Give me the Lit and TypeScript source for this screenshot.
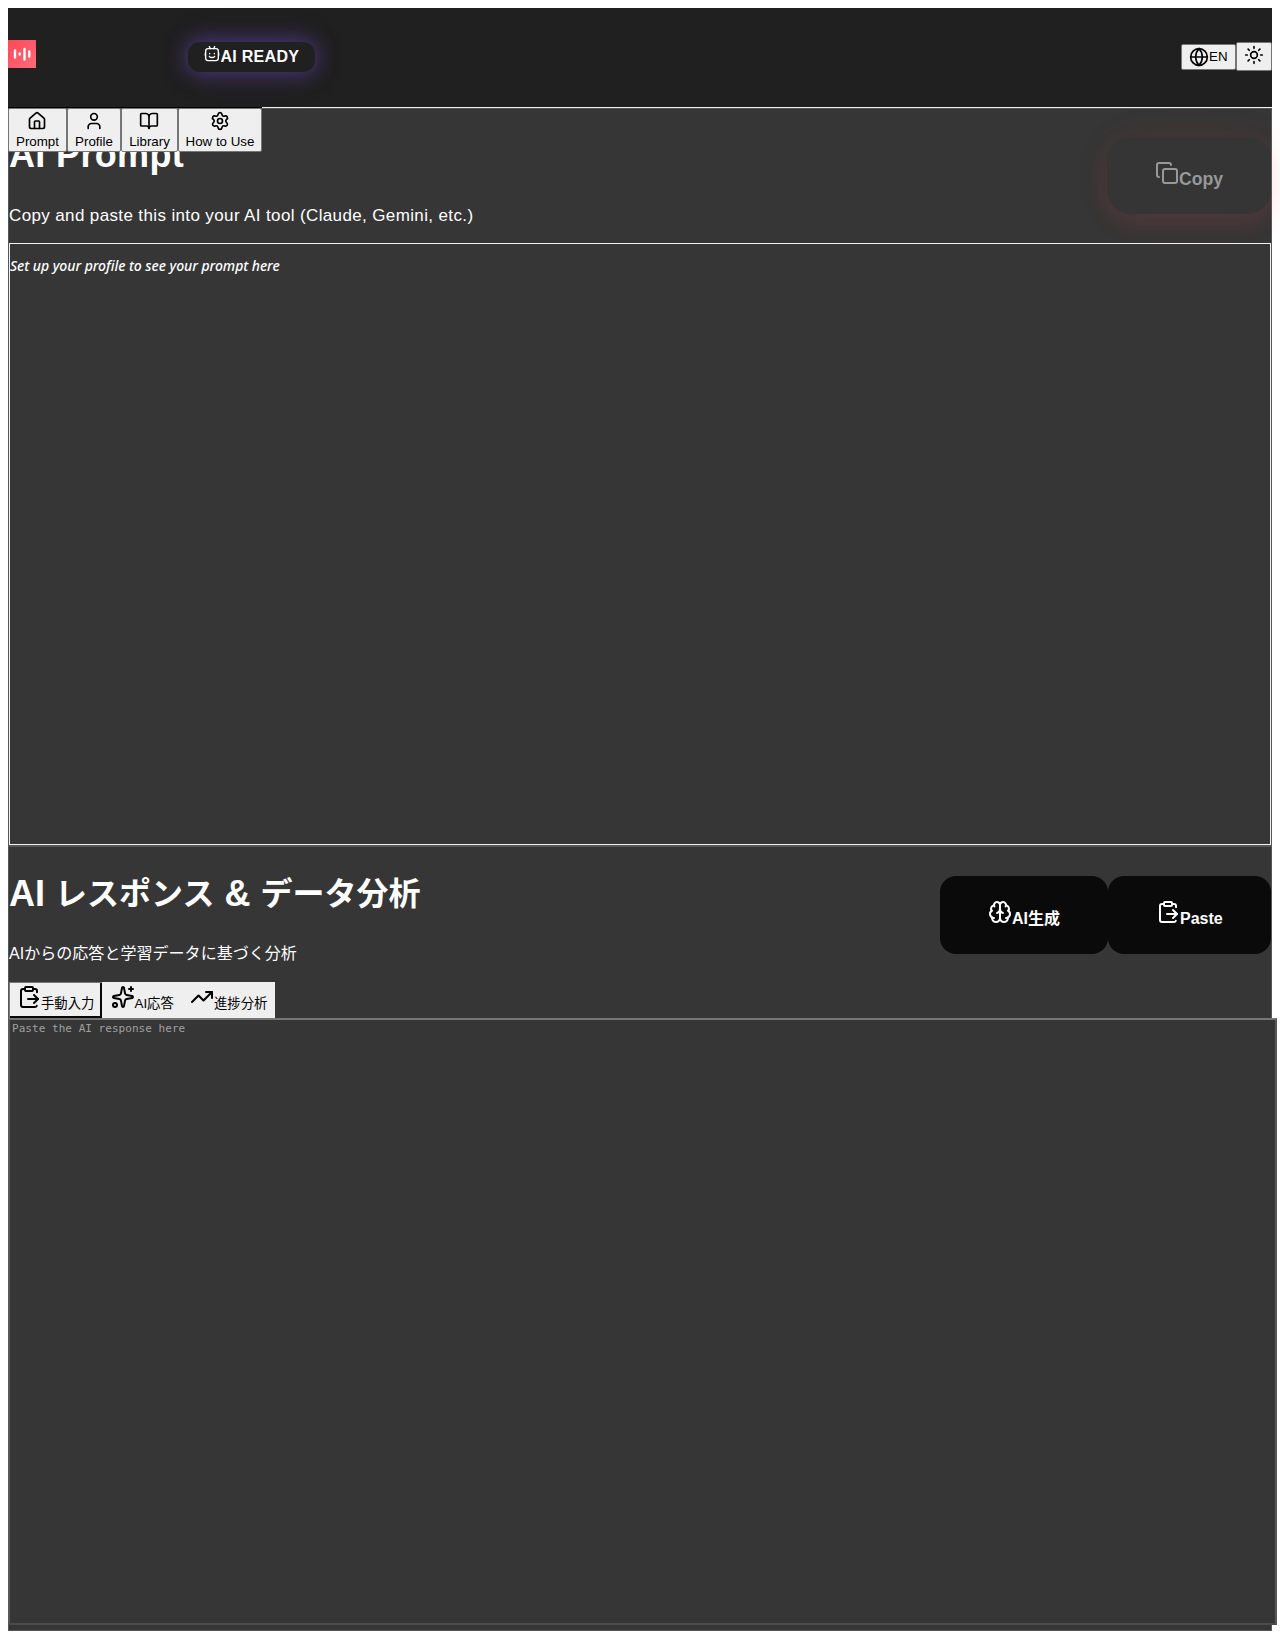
import { LitElement, html, css, svg, type SVGTemplateResult } from "lit";
import { customElement, property } from "lit/decorators.js";

const ICONS: Record<string, SVGTemplateResult> = {
  robot: svg`<rect x="2.500" y="4" width="19" height="18" rx="3.500"/><path d="M8 1l1.500 3M16 1l-1.500 3M2 10.500v4M22 10.500v4M8.500 11v.8M15.500 11v.8M8 15.500c1.500 2.400 6.500 2.400 8 0"/>`,
  house: svg`<path d="M15 21v-8a1 1 0 0 0-1-1h-4a1 1 0 0 0-1 1v8"/><path d="M3 10a2 2 0 0 1 .709-1.528l7-5.999a2 2 0 0 1 2.582 0l7 5.999A2 2 0 0 1 21 10v9a2 2 0 0 1-2 2H5a2 2 0 0 1-2-2z"/>`,
  user: svg`<path d="M19 21v-2a4 4 0 0 0-4-4H9a4 4 0 0 0-4 4v2"/><circle cx="12" cy="7" r="4"/>`,
  book: svg`<path d="M12 7v14"/><path d="M3 18a1 1 0 0 1-1-1V4a1 1 0 0 1 1-1h5a4 4 0 0 1 4 4 4 4 0 0 1 4-4h5a1 1 0 0 1 1 1v13a1 1 0 0 1-1 1h-6a3 3 0 0 0-3 3 3 3 0 0 0-3-3z"/>`,
  gear: svg`<path d="M9.671 4.136a2.34 2.34 0 0 1 4.659 0 2.34 2.34 0 0 0 3.319 1.915 2.34 2.34 0 0 1 2.33 4.033 2.34 2.34 0 0 0 0 3.831 2.34 2.34 0 0 1-2.33 4.033 2.34 2.34 0 0 0-3.319 1.915 2.34 2.34 0 0 1-4.659 0 2.34 2.34 0 0 0-3.32-1.915 2.34 2.34 0 0 1-2.33-4.033 2.34 2.34 0 0 0 0-3.831A2.34 2.34 0 0 1 6.35 6.051a2.34 2.34 0 0 0 3.319-1.915"/><circle cx="12" cy="12" r="3"/>`,
  globe: svg`<circle cx="12" cy="12" r="10"/><path d="M12 2a14.5 14.5 0 0 0 0 20 14.5 14.5 0 0 0 0-20"/><path d="M2 12h20"/>`,
  sun: svg`<circle cx="12" cy="12" r="4"/><path d="M12 2v2M12 20v2M4.930 4.930l1.410 1.410M17.660 17.660l1.410 1.410M2 12h2M20 12h2M6.340 17.660l-1.410 1.410M19.070 4.930l-1.410 1.410"/>`,
  copy: svg`<rect width="14" height="14" x="8" y="8" rx="2"/><path d="M4 16c-1.100 0-2-.9-2-2V4c0-1.100.9-2 2-2h10c1.100 0 2 .9 2 2"/>`,
  paste: svg`<path d="M11 14h10"/><path d="M16 4h2a2 2 0 0 1 2 2v1.344"/><path d="m17 18 4-4-4-4"/><path d="M8 4H6a2 2 0 0 0-2 2v14a2 2 0 0 0 2 2h12a2 2 0 0 0 1.793-1.113"/><rect x="8" y="2" width="8" height="4" rx="1"/>`,
  brain: svg`<path d="M12 18V5"/><path d="M15 13a4.170 4.170 0 0 1-3-4 4.170 4.170 0 0 1-3 4"/><path d="M17.598 6.500A3 3 0 1 0 12 5a3 3 0 1 0-5.598 1.500"/><path d="M17.997 5.125a4 4 0 0 1 2.526 5.770"/><path d="M18 18a4 4 0 0 0 2-7.464"/><path d="M19.967 17.483A4 4 0 1 1 12 18a4 4 0 1 1-7.967-.517"/><path d="M6 18a4 4 0 0 1-2-7.464"/><path d="M6.003 5.125a4 4 0 0 0-2.526 5.770"/>`,
  sparkles: svg`<path d="M11.017 2.814a1 1 0 0 1 1.966 0l1.051 5.558a2 2 0 0 0 1.594 1.594l5.558 1.051a1 1 0 0 1 0 1.966l-5.558 1.051a2 2 0 0 0-1.594 1.594l-1.051 5.558a1 1 0 0 1-1.966 0l-1.051-5.558a2 2 0 0 0-1.594-1.594l-5.558-1.051a1 1 0 0 1 0-1.966l5.558-1.051a2 2 0 0 0 1.594-1.594z"/><path d="M20 2v4M22 4h-4"/><circle cx="4" cy="20" r="2"/>`,
  trend: svg`<path d="M16 7h6v6"/><path d="m22 7-8.500 8.500-5-5L2 17"/>`,
};

@customElement("app-icon")
export class AppIcon extends LitElement {
  @property() name = "";
  static styles = css`
    :host { display: block; flex: none; width: 24px; height: 24px; }
    svg { display: block; width: 100%; height: 100%; fill: none; stroke: currentColor; stroke-width: 2; stroke-linecap: round; stroke-linejoin: round; }
  `;
  render() {
    return html`<svg viewBox="0 0 24 24">${ICONS[this.name]}</svg>`;
  }
}

@customElement("app-root")
export class AppRoot extends LitElement {
  static styles = css`
    :host {
      display: block;
      height: 1639px;
      padding: 8px;
      box-sizing: border-box;
      overflow: hidden;
      background: #fff;
      color: #fff;
      font-family: "Liberation Sans", "Noto Sans CJK JP", sans-serif;
    }
    * { box-sizing: border-box; }
    button { font-family: inherit; margin: 0; padding: 0; display: flex; white-space: nowrap; }
    .shell { position: relative; height: 1623px; }
    .top { display: flex; height: 100px; background: #202020; border-bottom: 1px solid #f0f0f0; }
    .logo { width: 28px; height: 28px; margin-top: 31.500px; background: linear-gradient(135deg, #ff4757, #ff6b7a); }
    .logo svg { display: block; }
    .badge {
      display: flex; width: 127px; height: 30px; margin: 34px 0 0 152px; padding: 4px 0 0 16px;
      border-radius: 12px; background: #202020; box-shadow: 0 0 20px rgba(112, 72, 200, .62), 0 0 40px rgba(112, 72, 200, .12);
      font-size: 16px; font-weight: 700; line-height: 22px; letter-spacing: .28px; white-space: nowrap;
    }
    .badge app-icon { width: 16px; height: 16px; margin-top: -.5px; }
    .badge span { margin-left: .5px; }
    .actions { display: flex; margin-left: auto; }
    .light { background: #efefef; color: #000; border: 1px solid #767676; border-radius: 2px; }
    .lang { width: 55px; height: 26px; margin-top: 36px; padding: 2px 0 0 7px; font-size: 13.330px; line-height: 20px; }
    .lang app-icon { width: 20px; height: 20px; }
    .theme { width: 36px; height: 29px; margin-top: 34px; padding: 2px 0 0 7px; }
    .theme app-icon { width: 20px; height: 20px; }

    .nav { position: absolute; left: 0; top: 99px; display: flex; border-top: 1px solid #000; }
    .nav button { height: 44px; padding-top: 2px; flex-direction: column; align-items: center; font-size: 13.330px; line-height: 15px; }
    .nav app-icon { width: 20px; height: 20px; margin: 0 1px 3px 0; }
    .n0 { width: 59px; } .n1 { width: 54px; } .n2 { width: 57px; } .n3 { width: 84px; }

    .panel { background: #363636; border: 1px solid #565656; }
    .prompt { height: 738px; }
    .response { height: 785px; }
    .head { display: flex; height: 134px; }
    .response .head { height: 135px; }
    h1 { margin: 0; font-size: 36px; font-weight: 700; line-height: 40px; white-space: nowrap; }
    .h-prompt { padding-top: 26px; letter-spacing: .35px; }
    .h-data { padding-top: 27px; font-size: 32px; display: flex; }
    .h-data .lat { font-size: 36px; }
    .sub { margin: 0; font-size: 16px; line-height: 24px; white-space: nowrap; }
    .sub-en { padding-top: 29px; font-size: 17px; letter-spacing: .37px; }
    .sub-ja { padding-top: 28px; letter-spacing: .04px; }
    .ctas { display: flex; margin-left: auto; }
    .cta { border: 0; color: #fff; background: #0a0a0a; font-size: 16px; font-weight: 700; height: 78px; margin-top: 29px; border-radius: 16px; }
    .cta span { line-height: 20px; }
    .copy { width: 164px; height: 77px; margin-top: 28px; padding: 24px 0 0 48px; border-radius: 24px; background: #353535; color: #989898; font-size: 17.600px; box-shadow: 0 8px 24px rgba(255, 71, 87, .12), 0 0 40px rgba(255, 71, 87, .06); }
    .copy span { padding-top: 8px; }
    .gen { width: 168px; padding: 24px 0 0 48px; }
    .gen span, .pst span { padding-top: 9px; }
    .pst { width: 163px; padding: 24px 0 0 48px; }
    .output { height: 602px; border: 1px solid #f0f0f0; padding: 13px 0 0 0; font: italic 500 14px/18px "Noto Sans", sans-serif; letter-spacing: -.05px; }
    .tabs { display: flex; height: 36px; }
    .tabs button { border: 0; background: #efefef; color: #000; font-size: 13.330px; }
    .tabs span { padding-top: 13px; line-height: 18px; }
    .tabs .t0 { width: 93px; padding-left: 8px; box-shadow: inset 0 1px #777, inset 1px 0 #777, inset -2px -2px #080808; }
    .tabs .t1 { width: 79px; padding-left: 8.500px; }
    .tabs .t2 { width: 94px; padding-left: 9px; }
    .tabs app-icon { margin-top: 3px; }
    .entry {
      width: 1269px; height: 607px; margin-left: -1px; padding: 2px 0 0 2px; background: #363636;
      border: 2px solid; border-color: #767676 #585858 #4c4c4c #585858; color: #a0a0a0;
      font: 11px/14px "DejaVu Sans Mono", monospace; letter-spacing: .04px;
    }
  `;

  private nav = [["house", "Prompt"], ["user", "Profile"], ["book", "Library"], ["gear", "How to Use"]];
  private tabs = [["paste", "手動入力"], ["sparkles", "AI応答"], ["trend", "進捗分析"]];

  render() {
    return html`
      <div class="shell">
        <header class="top">
          <div class="logo">
            <svg width="28" height="28" viewBox="0 0 28 28" stroke="#fff" stroke-width="2.400" stroke-linecap="round">
              <path d="M7 10.500v7M11.700 13.500v1M16.500 9v10.500M21.300 11.500v5" />
            </svg>
          </div>
          <div class="badge"><app-icon name="robot"></app-icon><span>AI READY</span></div>
          <div class="actions">
            <button class="light lang"><app-icon name="globe"></app-icon><span>EN</span></button>
            <button class="light theme"><app-icon name="sun"></app-icon></button>
          </div>
        </header>
        <section class="panel prompt">
          <div class="head">
            <div>
              <h1 class="h-prompt">AI Prompt</h1>
              <p class="sub sub-en">Copy and paste this into your AI tool (Claude, Gemini, etc.)</p>
            </div>
            <div class="ctas"><button class="cta copy"><app-icon name="copy"></app-icon><span>Copy</span></button></div>
          </div>
          <div class="output">Set up your profile to see your prompt here</div>
        </section>
        <section class="panel response">
          <div class="head">
            <div>
              <h1 class="h-data"><span class="lat">AI&nbsp;</span><span>レスポンス</span><span class="lat">&nbsp;&amp;&nbsp;</span><span>データ分析</span></h1>
              <p class="sub sub-ja">AIからの応答と学習データに基づく分析</p>
            </div>
            <div class="ctas">
              <button class="cta gen"><app-icon name="brain"></app-icon><span>AI生成</span></button>
              <button class="cta pst"><app-icon name="paste"></app-icon><span>Paste</span></button>
            </div>
          </div>
          <div class="tabs">
            ${this.tabs.map(([icon, label], i) => html`<button class="t${i}"><app-icon name=${icon}></app-icon><span>${label}</span></button>`)}
          </div>
          <div class="entry">Paste the AI response here</div>
        </section>
        <nav class="nav">
          ${this.nav.map(([icon, label], i) => html`<button class="light n${i}"><app-icon name=${icon}></app-icon><span>${label}</span></button>`)}
        </nav>
      </div>
    `;
  }
}
